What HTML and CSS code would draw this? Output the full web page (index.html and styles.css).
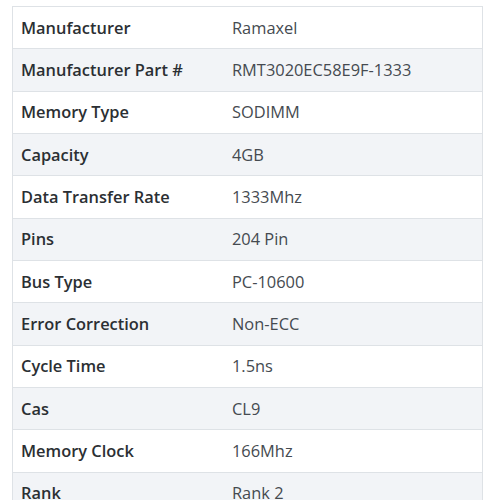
FILE: index.html
```html
<!DOCTYPE html>
<html><head>
<title>Memory Specifications</title>
<link rel="stylesheet" href="styles.css">
<meta charset="UTF-8">
</head>
<body>
<table class="specs">
<tr><th>Manufacturer</th><td>Ramaxel</td></tr>
<tr><th>Manufacturer Part #</th><td>RMT3020EC58E9F-1333</td></tr>
<tr><th>Memory Type</th><td>SODIMM</td></tr>
<tr><th>Capacity</th><td>4GB</td></tr>
<tr><th>Data Transfer Rate</th><td>1333Mhz</td></tr>
<tr><th>Pins</th><td>204 Pin</td></tr>
<tr><th>Bus Type</th><td>PC-10600</td></tr>
<tr><th>Error Correction</th><td>Non-ECC</td></tr>
<tr><th>Cycle Time</th><td>1.5ns</td></tr>
<tr><th>Cas</th><td>CL9</td></tr>
<tr><th>Memory Clock</th><td>166Mhz</td></tr>
<tr><th>Rank</th><td>Rank 2</td></tr>
</table>
</body></html>
```

FILE: styles.css
```css
body {
  margin: 0;
  padding: 6px 17px 0 12px;
  background: white;
  font-family: "Open Sans", "Noto Sans", sans-serif;
  font-size: 16.4px;
  color: #2b2f33;
}

.specs {
  width: 100%;
  border-collapse: collapse;
  border: 1px solid #dee2e6;
}

.specs th, .specs td {
  text-align: left;
  vertical-align: middle;
  line-height: 24px;
  padding: 8.68px 8px;
  border-top: 1px solid #dee2e6;
}

.specs th {
  width: 195px;
  font-weight: 600;
  color: #2b2f33;
}

.specs td { color: #454a50; }

.specs tr:nth-child(even) { background: #f2f4f7; }
```
